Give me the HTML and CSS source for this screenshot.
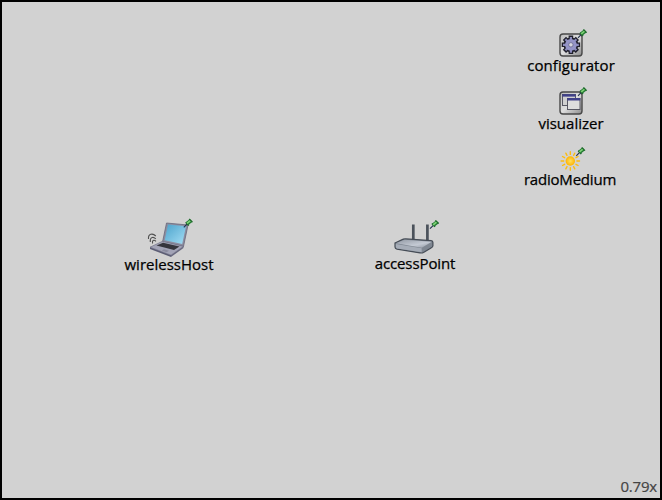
FILE: index.html
```
<!DOCTYPE html>
<html lang="en">
<head>
<meta charset="utf-8">
<title>Network</title>
<link rel="stylesheet" href="styles.css">
</head>
<body>
<svg class="defs" width="0" height="0" aria-hidden="true">
  <defs>
    <linearGradient id="tile" x1="0" y1="0" x2="1" y2="1"><stop offset="0" stop-color="#bcbcbc"/><stop offset=".5" stop-color="#dedede"/><stop offset="1" stop-color="#8c8c8c"/></linearGradient>
    <linearGradient id="screen" x1="0" y1="0" x2="1" y2="1"><stop offset="0" stop-color="#4ba3cc"/><stop offset="1" stop-color="#a5def5"/></linearGradient>
    <linearGradient id="router" x1="0" y1="0" x2="1" y2="1"><stop offset="0" stop-color="#9299a4"/><stop offset=".6" stop-color="#c4cad4"/><stop offset="1" stop-color="#8c939e"/></linearGradient>
    <radialGradient id="sun"><stop offset="0" stop-color="#ffe060"/><stop offset="1" stop-color="#ffb400"/></radialGradient>
    <g id="pin">
      <path d="M-1 1L2.6-2.6" stroke="#20304c" stroke-width="1.1"/>
      <path d="M.9-4.1L4-.9" stroke="#1c602c" stroke-width="1.5"/>
      <path d="M2.1-2.5L6.2-5.8" stroke="#237a32" stroke-width="3.9"/>
      <path d="M2.2-2.9L6.2-6.2" stroke="#7ed276" stroke-width="1.7"/>
      <path d="M4.4-7.3L7.7-4.2" stroke="#1c682a" stroke-width="1.3"/>
    </g>
  </defs>
</svg>
<main class="canvas">
  <div class="node configurator">
    <svg class="icon" width="44" height="36" viewBox="0 0 44 36">
      <rect x="10" y="10" width="22" height="22" rx="3" fill="url(#tile)" stroke="#484848" stroke-width="1.4"/>
      <g transform="translate(20.9 20.8)">
        <g stroke="#20202c" stroke-width="4.6"><path d="M0-9.2V9.2M-9.2 0H9.2M-6.5-6.5L6.5 6.5M-6.5 6.5L6.5-6.5"/></g>
        <circle r="7.4" fill="#20202c"/>
        <g stroke="#8b8bbd" stroke-width="2.2"><path d="M0-7.9V7.9M-7.9 0H7.9M-5.5-5.5L5.5 5.5M-5.5 5.5L5.5-5.5"/></g>
        <circle r="5.9" fill="#9494c6"/>
        <circle r="2.2" fill="#d8d8e0" stroke="#66668c" stroke-width=".8"/>
      </g>
      <use href="#pin" x="29" y="12.8"/>
    </svg>
    <span class="label">configurator</span>
  </div>
  <div class="node visualizer">
    <svg class="icon" width="44" height="36" viewBox="0 0 44 36">
      <rect x="10" y="10" width="22" height="22" rx="3" fill="url(#tile)" stroke="#484848" stroke-width="1.4"/>
      <rect x="12.5" y="12.5" width="13" height="11" fill="#d0d0d0" stroke="#4c4c58" stroke-width=".9"/>
      <rect x="12.3" y="12.2" width="13.4" height="2.4" fill="#40408a"/>
      <rect x="17.5" y="16.5" width="12.5" height="11" fill="#dedede" stroke="#4c4c58" stroke-width=".9"/>
      <rect x="17.3" y="16" width="13" height="2.5" fill="#40408a"/>
      <use href="#pin" x="29" y="12.8"/>
    </svg>
    <span class="label">visualizer</span>
  </div>
  <div class="node radio-medium">
    <svg class="icon" width="44" height="32" viewBox="0 0 44 32">
      <g transform="translate(20.3 19)" stroke="#fbbc10" stroke-width="1.4" stroke-linecap="round">
        <path d="M0-6.6V-9.2M0 6.6V9.2M-6.6 0H-9.2M6.6 0H9.2M3.3-5.7L4.5-7.8M5.7-3.3L7.8-4.5M-3.3-5.7L-4.5-7.8M-5.7-3.3L-7.8-4.5M3.3 5.7L4.5 7.8M5.7 3.3L7.8 4.5M-3.3 5.7L-4.5 7.8M-5.7 3.3L-7.8 4.5"/>
        <circle r="4.7" fill="url(#sun)" stroke="none"/>
      </g>
      <use href="#pin" x="27.3" y="12.8"/>
    </svg>
    <span class="label">radioMedium</span>
  </div>
  <div class="node wireless-host">
    <svg class="icon" width="60" height="48" viewBox="0 0 60 48">
      <g fill="none" stroke="#505050" stroke-width="1.1"><path d="M8.5 27C8 21.8 12.5 20.8 15.8 24M10.3 30C9.8 25.4 12.8 24 15.8 26.8M12.6 31.5C11.8 28.5 13.8 27.3 16 29.3"/></g>
      <path d="M26.5 11L48 13L43.5 34.5L22.5 30Z" fill="#8c8da0" stroke="#5e5f72" stroke-width=".7"/>
      <path d="M28 12.6L46 14.2L42.2 32L24.7 28.3Z" fill="url(#screen)"/>
      <path d="M10 35L31 43V45L10 37Z" fill="#5c5d74"/>
      <path d="M43.5 34.2L31 43V45L43.5 36Z" fill="#696a80"/>
      <path d="M22.5 29.3L43.5 34.3L31 43.2L10 35.2Z" fill="#a3a4b7" stroke="#66677d" stroke-width=".6"/>
      <path d="M23 30.7L39.5 34.5L34 38L16.5 33.6Z" fill="#35353d"/>
      <path d="M24 37.3L29 38.8L26.5 40.2L21.8 38.5Z" fill="#8a8b9f"/>
      <use href="#pin" x="44.8" y="14.3"/>
    </svg>
    <span class="label">wirelessHost</span>
  </div>
  <div class="node access-point">
    <svg class="icon" width="60" height="44" viewBox="0 0 60 44">
      <path d="M27.3 10.5V27M41.4 10.5V28" stroke="#4b525b" stroke-width="2.7"/>
      <path d="M9 29L17.3 25.1Q18 24.8 20 24.9L45 26.6Q47 26.8 46.9 28.5V32Q46.8 33 45 34L37.5 38.5Q36 39.2 34 38.9L11 35.1Q9 34.6 9 33Z" fill="#7f8792" stroke="#454c56" stroke-width="1.2"/>
      <path d="M10 29.3L18.4 25.8L45.8 27.7L35.8 33.8Z" fill="url(#router)"/>
      <path d="M9.8 30L35.7 34.2V38.3L11 34.4Q9.8 34 9.8 33Z" fill="#a6adb8"/>
      <use href="#pin" x="45" y="13.7"/>
    </svg>
    <span class="label">accessPoint</span>
  </div>
  <div class="zoom">0.79x</div>
</main>
</body>
</html>
```
FILE: styles.css
```
* { box-sizing: border-box; }
body { margin: 0; }
.defs { position: absolute; }
.canvas {
  position: relative;
  width: 662px;
  height: 500px;
  overflow: hidden;
  border: 2px solid #000;
  background: #d2d2d2;
  color: #000;
  font: 15px/20px "Open Sans", "Noto Sans", sans-serif;
}
.node {
  position: absolute;
  display: flex;
  flex-direction: column;
}
.icon { display: block; fill: none; }
.label {
  align-self: center;
  white-space: nowrap;
  margin-top: -5px;
  -webkit-text-stroke: 0.25px #000;
}
.configurator { left: 548px; top: 22px; width: 42px; }
.configurator .label { letter-spacing: 0.1px; }
.visualizer { left: 548px; top: 80px; width: 42px; }
.radio-medium { left: 548px; top: 140px; width: 40px; }
.radio-medium .label { letter-spacing: -0.2px; }
.wireless-host { left: 138px; top: 210px; width: 58px; }
.wireless-host .label { margin-top: -6px; }
.access-point { left: 384px; top: 212px; width: 58px; }
.access-point .label { letter-spacing: -0.1px; }
.zoom {
  position: absolute;
  right: 3px;
  bottom: 2px;
  color: #444;
  letter-spacing: -0.2px;
  -webkit-text-stroke: 0.2px #444;
}
```
